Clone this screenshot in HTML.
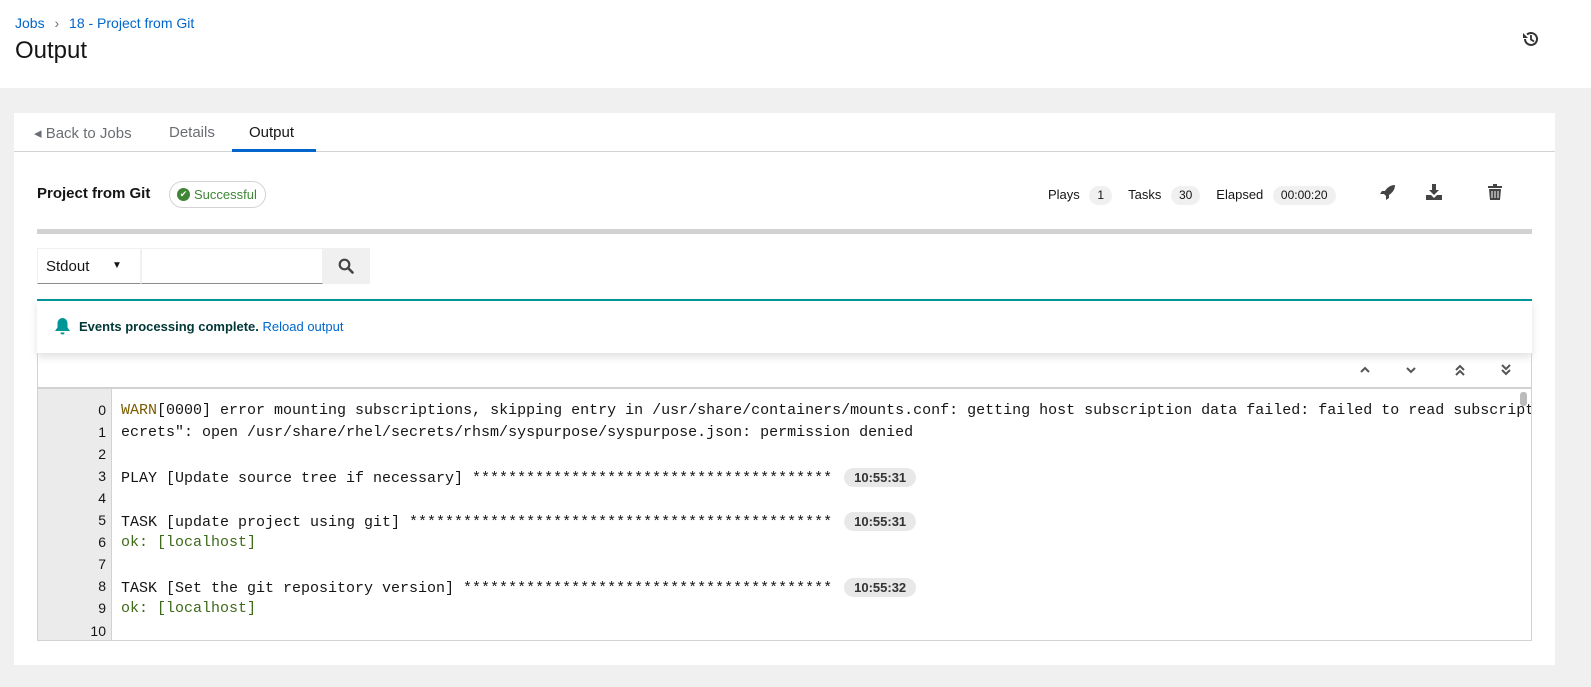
<!DOCTYPE html>
<html><head><meta charset="utf-8"><style>
*{box-sizing:border-box;margin:0;padding:0}
body{width:1591px;height:687px;background:#f0f0f0;font-family:"Liberation Sans",sans-serif;color:#151515;position:relative;overflow:hidden}
.hdr{position:absolute;left:0;top:0;width:1591px;height:88px;background:#fff}
.a{color:#06c;text-decoration:none}
.card{position:absolute;left:14px;top:113px;width:1541px;height:552px;background:#fff}
.abs{position:absolute}
.pill{display:inline-block;background:#f0f0f0;border-radius:10px;font-size:12px;padding:2px 8px;height:19px;line-height:15px}
.mono{font-family:"Liberation Mono",monospace;font-size:15px}
.ln{position:absolute;left:0;width:68px;text-align:right;font-family:"Liberation Sans",sans-serif;font-size:14px;color:#151515}
.tx{position:absolute;left:83px;white-space:pre}
.ts{display:inline-block;background:#e8e8e8;border-radius:10px;font-family:"Liberation Sans",sans-serif;font-size:13px;padding:2px 10px;margin-left:12px;font-weight:bold;color:#333}
</style></head><body>
<div class="hdr">
<div class="abs" style="left:15px;top:15px;font-size:14px"><a class="a">Jobs</a> <span style="color:#6a6e73;margin:0 6px">›</span> <a class="a">18 - Project from Git</a></div>
<div class="abs" style="left:15px;top:37px;font-size:24px">Output</div>
<svg class="abs" style="left:1522px;top:30px" width="18" height="18" viewBox="0 0 18 18"><path d="M3 9a6 6 0 1 0 2-4.5" fill="none" stroke="#333" stroke-width="2"/><path d="M1 3v5h5z" fill="#333"/><path d="M9 5v4.5l3 2" fill="none" stroke="#333" stroke-width="1.8"/></svg>
</div>
<div class="card">
<div class="abs" style="left:0;top:38px;width:1541px;height:1px;background:#d2d2d2"></div>
<div class="abs" style="left:20px;top:11px;font-size:15px;color:#6a6e73">◂ Back to Jobs</div>
<div class="abs" style="left:155px;top:11px;font-size:15px;color:#6a6e73">Details</div>
<div class="abs" style="left:235px;top:11px;font-size:15px;color:#151515">Output</div>
<div class="abs" style="left:218px;top:36px;width:84px;height:3px;background:#06c"></div>
<div class="abs" style="left:23px;top:72px;font-size:15px;font-weight:bold">Project from Git</div>
<div class="abs" style="left:155px;top:68px;width:97px;height:27px;border:1px solid #d2d2d2;border-radius:14px;font-size:13px;color:#3e8635;padding:5px 0 0 24px">Successful<span class="abs" style="left:7px;top:6px;width:13px;height:13px;border-radius:50%;background:#3e8635;color:#fff;font-size:9px;line-height:13px;text-align:center">✔</span></div>
<div class="abs" style="left:1034px;top:73px;font-size:13px">Plays <span class="pill" style="margin:0 16px 0 6px">1</span>Tasks <span class="pill" style="margin:0 16px 0 6px">30</span>Elapsed <span class="pill" style="margin-left:6px">00:00:20</span></div>
<svg class="abs" style="left:1366px;top:71px" width="16" height="16" viewBox="0 0 16 16"><path d="M15 1C10 1 7 4 5 7L2 7 0 10h4l2 2v4l3-2 0-3c3-2 6-5 6-10z" fill="#444"/></svg>
<svg class="abs" style="left:1412px;top:71px" width="16" height="16" viewBox="0 0 16 16"><path d="M6 0h4v6h3l-5 5-5-5h3z" fill="#444"/><path d="M0 11h5l3 3 3-3h5v5H0z" fill="#444"/></svg>
<svg class="abs" style="left:1474px;top:71px" width="14" height="16" viewBox="0 0 14 16"><path d="M0 2h14v2H0zM5 0h4v2H5zM1 5h12l-1 11H2z" fill="#444"/><path d="M4 7v7M7 7v7M10 7v7" stroke="#fff" stroke-width="1"/></svg>
<div class="abs" style="left:23px;top:116px;width:1495px;height:5px;background:#d2d2d2"></div>
<div class="abs" style="left:23px;top:135px;width:104px;height:36px;border:1px solid #f0f0f0;border-bottom:1px solid #8a8d90;font-size:15px;padding:9px 0 0 8px">Stdout<span class="abs" style="left:74px;top:11px;font-size:10px">▼</span></div>
<div class="abs" style="left:127px;top:135px;width:182px;height:36px;border:1px solid #f0f0f0;border-bottom:1px solid #8a8d90"></div>
<div class="abs" style="left:309px;top:135px;width:47px;height:36px;background:#f0f0f0"></div>
<svg class="abs" style="left:324px;top:145px" width="16" height="16" viewBox="0 0 16 16"><circle cx="6.5" cy="6.5" r="4.8" fill="none" stroke="#444" stroke-width="2.2"/><path d="M10 10l4.5 4.5" stroke="#444" stroke-width="2.6" stroke-linecap="round"/></svg>
<div class="abs" style="left:23px;top:186px;width:1495px;height:54px;border-top:2px solid #009596;box-shadow:0 4px 8px rgba(0,0,0,.12);background:#fff"></div>
<svg class="abs" style="left:41px;top:205px" width="15" height="17" viewBox="0 0 15 17"><path d="M7.5 0c-3 0-5 2.5-5 5.5v4L0 13h15l-2.5-3.5v-4C12.5 2.5 10.5 0 7.5 0z" fill="#009596"/><path d="M5.5 14.5h4a2 2 0 0 1-4 0z" fill="#009596"/></svg>
<div class="abs" style="left:65px;top:206px;font-size:13px;font-weight:bold;color:#003737">Events processing complete. <a class="a" style="font-weight:normal">Reload output</a></div>
<div class="abs" style="left:23px;top:240px;width:1495px;height:35px;border:1px solid #d2d2d2;border-top:none"></div>
<svg class="abs" style="left:1340px;top:250px;" width="170" height="14" viewBox="0 0 170 14"><g fill="none" stroke="#555" stroke-width="2"><path d="M7 9l4-4 4 4"/><path d="M53 5l4 4 4-4"/><path d="M102 7l4-4 4 4M102 12l4-4 4 4"/><path d="M148 2l4 4 4-4M148 7l4 4 4-4"/></g></svg>
<div class="abs mono" style="left:23px;top:275px;width:1495px;height:253px;border:1px solid #d2d2d2;overflow:hidden">
<div class="abs" style="left:0;top:0;width:74px;height:253px;background:#ebebeb;border-right:1px solid #d2d2d2"></div>
<div class="abs" style="right:4px;top:3px;width:7px;height:14px;background:#bbb;border-radius:3px"></div>
<div class="ln" style="top:13px">0</div><div class="tx" style="top:13px"><span style="color:#7a5c00">WARN</span>[0000] error mounting subscriptions, skipping entry in /usr/share/containers/mounts.conf: getting host subscription data failed: failed to read subscriptions</div>
<div class="ln" style="top:35px">1</div><div class="tx" style="top:35px">ecrets": open /usr/share/rhel/secrets/rhsm/syspurpose/syspurpose.json: permission denied</div>
<div class="ln" style="top:57px">2</div>
<div class="ln" style="top:79px">3</div><div class="tx" style="top:79px">PLAY [Update source tree if necessary] ****************************************<span class="ts">10:55:31</span></div>
<div class="ln" style="top:101px">4</div>
<div class="ln" style="top:123px">5</div><div class="tx" style="top:123px">TASK [update project using git] ***********************************************<span class="ts">10:55:31</span></div>
<div class="ln" style="top:145px">6</div><div class="tx" style="top:145px;color:#3e6b1a">ok: [localhost]</div>
<div class="ln" style="top:167px">7</div>
<div class="ln" style="top:189px">8</div><div class="tx" style="top:189px">TASK [Set the git repository version] *****************************************<span class="ts">10:55:32</span></div>
<div class="ln" style="top:211px">9</div><div class="tx" style="top:211px;color:#3e6b1a">ok: [localhost]</div>
<div class="ln" style="top:234px">10</div>
</div>
</div>
</body></html>
